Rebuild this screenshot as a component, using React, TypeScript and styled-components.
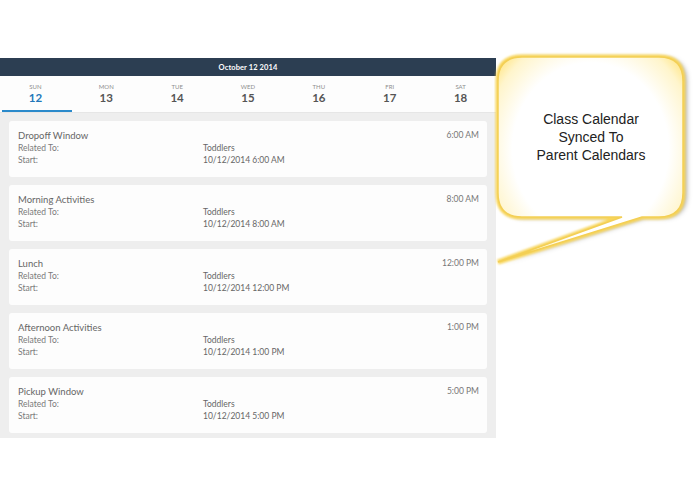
import React from "react";
import styled, { createGlobalStyle } from "styled-components";

const Global = createGlobalStyle`
  html, body { margin: 0; padding: 0; background: #ffffff; }
  body { font-family: Lato, "Open Sans", sans-serif; }
`;

const Page = styled.div`
  display: flex;
  align-items: flex-start;
  width: 695px;
  height: 494px;
  padding-top: 52px;
  box-sizing: border-box;
`;

const Calendar = styled.div`
  width: 496px;
  margin-top: 6px;
  display: flex;
  flex-direction: column;
`;

const TitleBar = styled.div`
  height: 18px;
  background: #2c3e52;
  color: #ffffff;
  font-size: 7.5px;
  font-weight: 700;
  display: flex;
  align-items: center;
  justify-content: center;
  letter-spacing: 0.1px;
`;

const DayRow = styled.div`
  display: grid;
  grid-template-columns: repeat(7, 1fr);
  height: 36px;
  background: #fdfdfd;
  border-bottom: 1px solid #e6e6e6;
`;

const DayCell = styled.div<{ $active?: boolean }>`
  position: relative;
  display: flex;
  flex-direction: column;
  align-items: center;
  padding-top: 7px;
  box-sizing: border-box;
  &::after {
    content: "";
    position: absolute;
    left: 2px;
    right: -1px;
    bottom: 0;
    height: 2px;
    background: ${(p) => (p.$active ? "#2b8acb" : "transparent")};
  }
`;

const DayName = styled.span`
  font-size: 6px;
  color: #8e8e8e;
  line-height: 8px;
`;

const DayNum = styled.span<{ $active?: boolean }>`
  font-size: 11.5px;
  font-weight: 700;
  line-height: 13px;
  color: ${(p) => (p.$active ? "#2277b9" : "#555555")};
`;

const List = styled.div`
  background: #eeeeee;
  padding: 8px 9px 5px 9px;
  display: flex;
  flex-direction: column;
  gap: 8px;
`;

const Card = styled.div`
  background: #fdfdfd;
  border-radius: 3px;
  height: 56px;
  box-sizing: border-box;
  padding: 8px 8px 0 9px;
  display: grid;
  grid-template-columns: 185px 1fr auto;
  grid-template-rows: 13px 12px 12px;
`;

const EventTitle = styled.div`
  grid-column: 1 / 3;
  font-size: 9.5px;
  line-height: 13px;
  color: #666666;
`;

const Time = styled.div`
  font-size: 8.5px;
  line-height: 13px;
  color: #777777;
  text-align: right;
`;

const Label = styled.div`
  font-size: 8.5px;
  line-height: 12px;
  color: #7a7a7a;
`;

const Value = styled.div`
  grid-column: 2 / 4;
  font-size: 8.5px;
  line-height: 12px;
  color: #666666;
`;

const CalloutWrap = styled.div`
  position: relative;
  width: 200px;
  height: 220px;
  margin-left: -2px;
`;

const CalloutShape = styled.svg`
  position: absolute;
  left: 0;
  top: 0;
`;

const CalloutText = styled.div`
  position: relative;
  width: 186px;
  margin-left: 4px;
  padding-top: 58px;
  text-align: center;
  font-family: "Liberation Sans", Arial, sans-serif;
  font-size: 14px;
  line-height: 18px;
  color: #222222;
`;

const days = [
  ["SUN", "12"],
  ["MON", "13"],
  ["TUE", "14"],
  ["WED", "15"],
  ["THU", "16"],
  ["FRI", "17"],
  ["SAT", "18"],
];

const events = [
  ["Dropoff Window", "6:00 AM", "10/12/2014 6:00 AM"],
  ["Morning Activities", "8:00 AM", "10/12/2014 8:00 AM"],
  ["Lunch", "12:00 PM", "10/12/2014 12:00 PM"],
  ["Afternoon Activities", "1:00 PM", "10/12/2014 1:00 PM"],
  ["Pickup Window", "5:00 PM", "10/12/2014 5:00 PM"],
];

const calloutPath =
  "M 28 5 H 165 Q 189 5 189 29 V 141 Q 189 165 165 165 H 148 L 4 210 L 128 165 H 28 Q 4 165 4 141 V 29 Q 4 5 28 5 Z";

export default function App() {
  return (
    <>
      <Global />
      <Page>
        <Calendar>
          <TitleBar>October 12 2014</TitleBar>
          <DayRow>
            {days.map(([n, d], i) => (
              <DayCell key={n} $active={i === 0}>
                <DayName>{n}</DayName>
                <DayNum $active={i === 0}>{d}</DayNum>
              </DayCell>
            ))}
          </DayRow>
          <List>
            {events.map(([t, time, start]) => (
              <Card key={t}>
                <EventTitle>{t}</EventTitle>
                <Time>{time}</Time>
                <Label>Related To:</Label>
                <Value>Toddlers</Value>
                <Label>Start:</Label>
                <Value>{start}</Value>
              </Card>
            ))}
          </List>
        </Calendar>
        <CalloutWrap>
          <CalloutShape width="200" height="220" viewBox="0 0 200 220">
            <defs>
              <radialGradient id="fillG" cx="50%" cy="45%" r="65%">
                <stop offset="0%" stopColor="#ffffff" />
                <stop offset="65%" stopColor="#ffffff" />
                <stop offset="88%" stopColor="#fff5cc" />
                <stop offset="100%" stopColor="#ffe584" />
              </radialGradient>
              <filter id="shadow" x="-10%" y="-10%" width="130%" height="130%">
                <feDropShadow dx="4" dy="1" stdDeviation="2.5" floodColor="#000000" floodOpacity="0.3" />
              </filter>
              <filter id="glow" x="-10%" y="-10%" width="120%" height="120%">
                <feGaussianBlur stdDeviation="1.2" />
              </filter>
            </defs>
            <path d={calloutPath} fill="#ffffff" filter="url(#shadow)" />
            <path d={calloutPath} fill="none" stroke="#f8d55a" strokeWidth="5" filter="url(#glow)" />
            <path d={calloutPath} fill="url(#fillG)" stroke="#f3cf55" strokeWidth="1.5" />
          </CalloutShape>
          <CalloutText>
            Class Calendar
            <br />
            Synced To
            <br />
            Parent Calendars
          </CalloutText>
        </CalloutWrap>
      </Page>
    </>
  );
}
